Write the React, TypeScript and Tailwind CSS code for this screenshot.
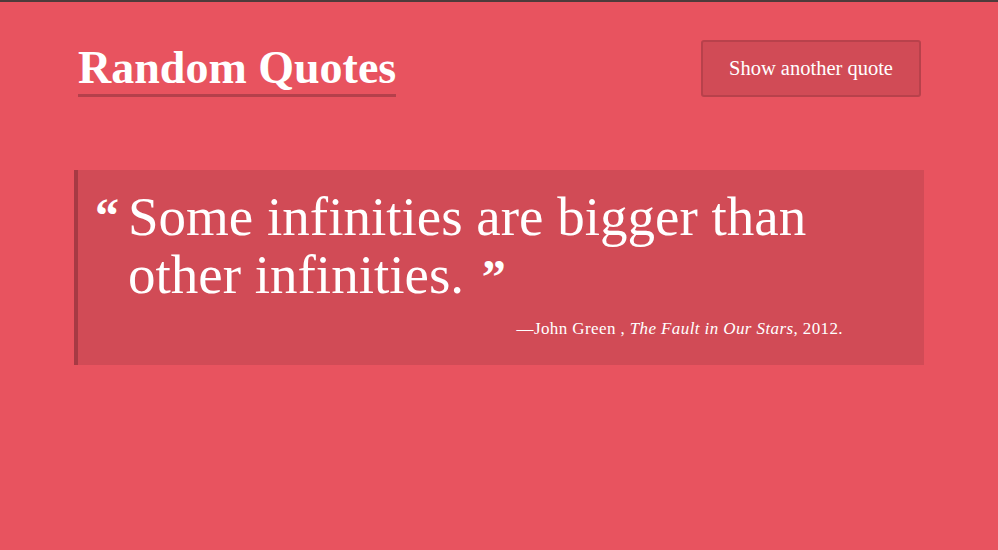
export default function App() {
  return (
    <div className="w-[998px] h-[550px] bg-[#e8535f] border-t-2 border-[#4d3b3b] overflow-hidden text-white" style={{ fontFamily: '"Liberation Serif", "DejaVu Serif", serif' }}>
      <div className="w-[843px] ml-[78px]">
        <header className="flex items-start justify-between pt-[38px]">
          <h1 className="mt-[3px] text-[46px] font-bold leading-[50px] border-b-[3px] border-[#b5404b] pb-[1px]">
            Random Quotes
          </h1>
          <button className="w-[220px] h-[57px] rounded-[3px] border-2 border-[#b8414b] bg-[#d14b56] text-white text-[20.5px]">
            Show another quote
          </button>
        </header>
        <blockquote className="mt-[73px] -ml-[4px] w-[850px] bg-[#d14b56] border-l-4 border-[#a63a44] pl-[17px] pr-[20px] pt-[18px] pb-[23px]">
          <div className="flex">
            <span className="text-[48px] font-bold leading-[56px] w-[33px] shrink-0">“</span>
            <p className="text-[55px] leading-[58px] w-[700px]">
              Some infinities are bigger than other infinities.&nbsp;<span className="text-[48px] font-bold leading-[40px] ml-[4px]">”</span>
            </p>
          </div>
          <p className="text-right pr-[61px] mt-[12px] text-[17px] tracking-[0.4px]">
            —John Green , <i>The Fault in Our Stars</i>, 2012.
          </p>
        </blockquote>
      </div>
    </div>
  );
}
